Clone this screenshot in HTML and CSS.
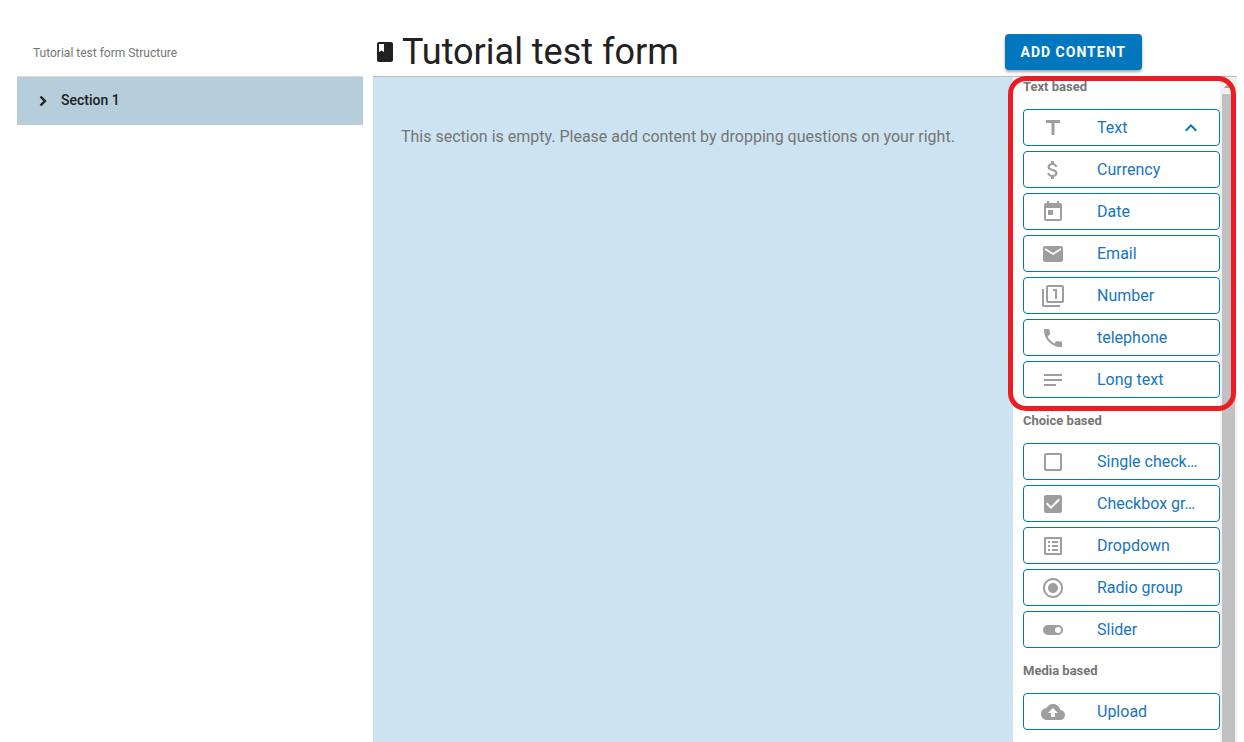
FILE: index.html
```html
<!DOCTYPE html>
<html lang="en">
<head>
<meta charset="utf-8">
<title>Tutorial test form</title>
<link rel="stylesheet" href="styles.css">
</head>
<body>
<div class="app">
  <aside class="structure">
    <h2 class="structure-title">Tutorial test form Structure</h2>
    <button class="section-row" type="button">
      <svg class="section-arrow" viewBox="0 0 12 12"><path d="M3.500 2.500 8 7 3.500 11.500" fill="none" stroke="currentColor" stroke-width="2.400"/></svg>
      <span>Section 1</span>
    </button>
  </aside>

  <main class="editor">
    <header class="editor-header">
      <svg class="icon book" viewBox="0 0 24 24"><path d="M18 2H6c-1.100 0-2 .9-2 2v16c0 1.100.9 2 2 2h12c1.100 0 2-.9 2-2V4c0-1.100-.9-2-2-2zM6 4h5v8l-2.500-1.500L6 12V4z"/></svg>
      <h1 class="form-title">Tutorial test form</h1>
      <button class="add-button" type="button">ADD CONTENT</button>
    </header>

    <div class="workspace">
      <section class="canvas">
        <p class="empty-note">This section is empty. Please add content by dropping questions on your right.</p>
      </section>

      <div class="palette">
        <div class="palette-list">
          <section class="group highlighted">
            <h3 class="group-title">Text based</h3>
            <button class="item" type="button">
              <svg class="icon" viewBox="0 0 24 24"><path d="M5 4v3h5.500v12h3V7H19V4z"/></svg>
              <span class="item-label">Text</span>
              <svg class="icon chevron" viewBox="0 0 24 24"><path d="M12 8l-6 6 1.410 1.410L12 10.830l4.590 4.580L18 14z"/></svg>
            </button>
            <button class="item" type="button">
              <svg class="icon" viewBox="0 0 24 24"><path d="M11.800 10.900c-2.270-.59-3-1.200-3-2.150 0-1.090 1.010-1.850 2.700-1.850 1.780 0 2.440.85 2.500 2.100h2.210c-.07-1.720-1.120-3.300-3.210-3.810V3h-3v2.160c-1.940.42-3.500 1.680-3.500 3.610 0 2.310 1.910 3.460 4.700 4.130 2.500.6 3 1.480 3 2.410 0 .69-.49 1.790-2.700 1.790-2.060 0-2.870-.92-2.980-2.100h-2.200c.12 2.190 1.760 3.420 3.680 3.830V21h3v-2.150c1.950-.37 3.500-1.500 3.500-3.550 0-2.840-2.430-3.810-4.700-4.400z"/></svg>
              <span class="item-label">Currency</span>
            </button>
            <button class="item" type="button">
              <svg class="icon" viewBox="0 0 24 24"><path d="M19 3h-1V1h-2v2H8V1H6v2H5c-1.110 0-1.990.9-1.990 2L3 19c0 1.100.89 2 2 2h14c1.100 0 2-.9 2-2V5c0-1.100-.9-2-2-2zm0 16H5V8h14v11zM7 10h5v5H7z"/></svg>
              <span class="item-label">Date</span>
            </button>
            <button class="item" type="button">
              <svg class="icon" viewBox="0 0 24 24"><path d="M20 4H4c-1.100 0-1.990.9-1.990 2L2 18c0 1.100.9 2 2 2h16c1.100 0 2-.9 2-2V6c0-1.100-.9-2-2-2zm0 4l-8 5-8-5V6l8 5 8-5v2z"/></svg>
              <span class="item-label">Email</span>
            </button>
            <button class="item" type="button">
              <svg class="icon" viewBox="0 0 24 24"><path d="M3 5H1v16c0 1.100.9 2 2 2h16v-2H3V5zm11 10h2V5h-4v2h2v8zm7-14H7c-1.100 0-2 .9-2 2v14c0 1.100.9 2 2 2h14c1.100 0 2-.9 2-2V3c0-1.100-.9-2-2-2zm0 16H7V3h14v14z"/></svg>
              <span class="item-label">Number</span>
            </button>
            <button class="item" type="button">
              <svg class="icon" viewBox="0 0 24 24"><path d="M6.620 10.790c1.440 2.830 3.760 5.140 6.590 6.590l2.200-2.200c.27-.27.67-.36 1.020-.24 1.120.37 2.330.57 3.570.57.55 0 1 .45 1 1V20c0 .55-.45 1-1 1-9.390 0-17-7.610-17-17 0-.55.45-1 1-1h3.500c.55 0 1 .45 1 1 0 1.250.2 2.450.57 3.570.11.35.03.74-.25 1.020l-2.200 2.200z"/></svg>
              <span class="item-label">telephone</span>
            </button>
            <button class="item" type="button">
              <svg class="icon" viewBox="0 0 24 24"><path d="M3 6h18v2H3zM3 11h18v2H3zM3 16h12v2H3z"/></svg>
              <span class="item-label">Long text</span>
            </button>
          </section>

          <section class="group">
            <h3 class="group-title">Choice based</h3>
            <button class="item" type="button">
              <svg class="icon" viewBox="0 0 24 24"><path d="M19 5v14H5V5h14m0-2H5c-1.100 0-2 .9-2 2v14c0 1.100.9 2 2 2h14c1.100 0 2-.9 2-2V5c0-1.100-.9-2-2-2z"/></svg>
              <span class="item-label">Single check…</span>
            </button>
            <button class="item" type="button">
              <svg class="icon" viewBox="0 0 24 24"><path d="M19 3H5c-1.110 0-2 .9-2 2v14c0 1.100.89 2 2 2h14c1.110 0 2-.9 2-2V5c0-1.100-.89-2-2-2zm-9 14l-5-5 1.410-1.410L10 14.170l7.590-7.590L19 8l-9 9z"/></svg>
              <span class="item-label">Checkbox gr…</span>
            </button>
            <button class="item" type="button">
              <svg class="icon" viewBox="0 0 24 24"><path d="M19 5v14H5V5h14m1.100-2H3.900c-.5 0-.9.4-.9.9v16.200c0 .4.400.9.900.9h16.200c.4 0 .9-.5.900-.9V3.900c0-.5-.5-.9-.9-.9zM11 7h6v2h-6V7zm0 4h6v2h-6v-2zm0 4h6v2h-6v-2zM7 7h2v2H7V7zm0 4h2v2H7v-2zm0 4h2v2H7v-2z"/></svg>
              <span class="item-label">Dropdown</span>
            </button>
            <button class="item" type="button">
              <svg class="icon" viewBox="0 0 24 24"><path d="M12 7c-2.760 0-5 2.240-5 5s2.240 5 5 5 5-2.240 5-5-2.240-5-5-5zm0-5C6.480 2 2 6.480 2 12s4.480 10 10 10 10-4.480 10-10S17.520 2 12 2zm0 18c-4.420 0-8-3.580-8-8s3.580-8 8-8 8 3.580 8 8-3.580 8-8 8z"/></svg>
              <span class="item-label">Radio group</span>
            </button>
            <button class="item" type="button">
              <svg class="icon" viewBox="0 0 24 24"><path fill-rule="evenodd" d="M17 7H7a5 5 0 0 0 0 10h10a5 5 0 0 0 0-10zm0 8a3 3 0 1 1 0-6 3 3 0 0 1 0 6z"/></svg>
              <span class="item-label">Slider</span>
            </button>
          </section>

          <section class="group">
            <h3 class="group-title">Media based</h3>
            <button class="item" type="button">
              <svg class="icon" viewBox="0 0 24 24"><path d="M19.350 10.040C18.670 6.590 15.640 4 12 4 9.110 4 6.600 5.640 5.350 8.040 2.340 8.360 0 10.910 0 14c0 3.310 2.690 6 6 6h13c2.760 0 5-2.240 5-5 0-2.640-2.050-4.780-4.650-4.960zM14 13v4h-4v-4H7l5-5 5 5h-3z"/></svg>
              <span class="item-label">Upload</span>
            </button>
          </section>
        </div>
        <div class="scrollbar" aria-hidden="true">
          <svg class="scroll-arrow" viewBox="0 0 17 17"><path d="M4 11h9L8.500 6z"/></svg>
          <div class="scroll-thumb"></div>
        </div>
      </div>
    </div>
  </main>
</div>
</body>
</html>
```
FILE: styles.css
```css
* {
  box-sizing: border-box;
}

body {
  margin: 0;
  background: #fff;
  color: #212121;
  font-family: Roboto, "Liberation Sans", sans-serif;
}

h1, h2, h3, p {
  margin: 0;
}

button {
  font-family: inherit;
  cursor: pointer;
}

.app {
  display: grid;
  grid-template-columns: 346px minmax(0, 1fr);
  column-gap: 10px;
  height: 100vh;
  padding: 0 7px 0 17px;
  overflow: hidden;
}

.icon {
  flex: none;
  width: 24px;
  height: 24px;
  fill: currentColor;
}

/* Form outline */
.structure-title {
  height: 76px;
  padding: 44px 16px 0;
  color: #757575;
  font-size: 12px;
  font-weight: 400;
  line-height: 18px;
}

.section-row {
  display: flex;
  align-items: center;
  gap: 12px;
  width: 100%;
  height: 49px;
  padding: 0 20px 2px;
  border: 0;
  border-top: 1px solid #dcdcdc;
  border-bottom: 1px solid #c6c8ca;
  background: #b6cddb;
  color: #212121;
  font-size: 14px;
  font-weight: 500;
  line-height: 20px;
}

.section-arrow {
  width: 12px;
  height: 12px;
  overflow: visible;
}

/* Editor */
.editor {
  display: flex;
  flex-direction: column;
  min-width: 0;
  height: 100vh;
}

.editor-header {
  display: flex;
  flex: none;
  align-items: center;
  height: 77px;
  padding: 27px 95px 0 0;
  border-bottom: 1px solid #bdbdbd;
}

.form-title {
  margin-left: 5px;
  font-size: 36px;
  font-weight: 400;
  line-height: 44px;
}

.add-button {
  height: 36px;
  margin-left: auto;
  padding: 0 16px;
  border: 0;
  border-radius: 4px;
  background: #0277bd;
  box-shadow: 0 2px 3px rgba(0, 0, 0, 0.35);
  color: #fff;
  font-size: 14px;
  font-weight: 700;
  letter-spacing: 1px;
}

.workspace {
  display: flex;
  flex: 1;
  min-height: 0;
}

.canvas {
  flex: 1;
  min-width: 0;
  padding: 48px 28px;
  background: #cce3f1;
}

.empty-note {
  color: #757575;
  font-size: 16px;
  line-height: 24px;
}

/* Question palette */
.palette {
  display: flex;
  flex: none;
  width: 224px;
}

.palette-list {
  display: flex;
  flex: 1;
  flex-direction: column;
  gap: 14px;
  padding: 1px 0 0 10px;
}

.group {
  position: relative;
  display: flex;
  flex-direction: column;
  gap: 5px;
}

.group-title {
  margin-bottom: 8px;
  color: #757575;
  font-size: 13px;
  font-weight: 700;
  line-height: 18px;
}

.highlighted::after {
  position: absolute;
  z-index: 1;
  inset: -2px -16px -13px -15px;
  border: 5px solid #ed1c24;
  border-radius: 18px;
  content: "";
  pointer-events: none;
}

.item {
  display: flex;
  align-items: center;
  height: 37px;
  padding: 0 16px 0 17px;
  border: 1px solid #0277bd;
  border-radius: 4px;
  background: #fff;
  color: #9e9e9e;
  font-size: 16px;
  line-height: 24px;
  text-align: left;
}

.item-label {
  flex: 1;
  margin-left: 32px;
  color: #1675bd;
  white-space: nowrap;
}

.chevron {
  color: #0277bd;
}

.scrollbar {
  flex: none;
  width: 17px;
  background: #f1f1f1;
}

.scroll-arrow {
  display: block;
  width: 17px;
  height: 17px;
  fill: #a3a3a3;
}

.scroll-thumb {
  height: 100%;
  margin: 0 2px;
  background: #c1c1c1;
}
```
